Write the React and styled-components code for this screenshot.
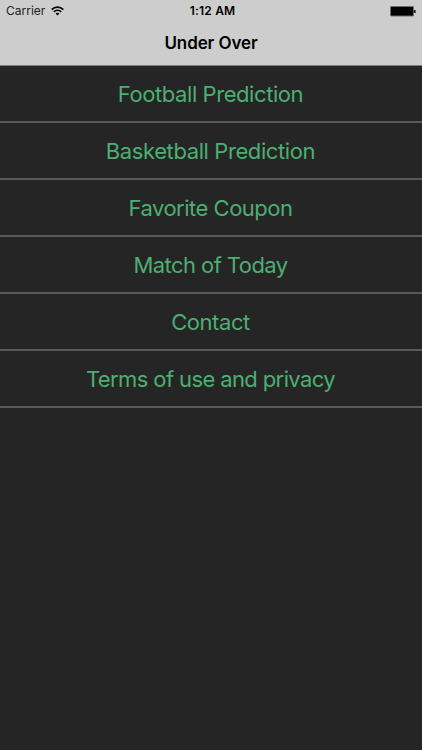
import React from 'react';
import styled, { createGlobalStyle } from 'styled-components';

const GlobalStyle = createGlobalStyle`
  * {
    box-sizing: border-box;
  }

  body {
    margin: 0;
    background-color: #252525;
    font-family: Inter, Roboto, sans-serif;
  }
`;

const Screen = styled.div`
  min-height: 100vh;
  background-color: #252525;
`;

const Header = styled.header`
  height: 66px;
  background-color: #cdcdcd;
  border-bottom: 1px solid #7b7f7c;
  color: #000;
`;

const StatusBar = styled.div`
  display: grid;
  grid-template-columns: 1fr auto 1fr;
  align-items: center;
  height: 22px;
  padding: 0 6px;
`;

const Carrier = styled.div`
  display: flex;
  align-items: center;
  gap: 6px;
  font-size: 12px;
  line-height: 22px;
  color: #222;
`;

const Clock = styled.div`
  padding-left: 3px;
  font-size: 12px;
  font-weight: 600;
  line-height: 22px;
  letter-spacing: 0.2px;
`;

const Battery = styled.svg`
  justify-self: end;
  display: block;
`;

const Title = styled.h1`
  margin: 0;
  font-size: 17px;
  font-weight: 600;
  line-height: 43px;
  letter-spacing: -0.1px;
  text-align: center;
`;

const Menu = styled.ul`
  margin: 0;
  padding: 0;
  list-style: none;
`;

const MenuItem = styled.li`
  display: flex;
  align-items: center;
  justify-content: center;
  height: 57px;
  padding-right: 1px;
  border-bottom: 2px solid #5a5a5a;
  color: #4caf72;
  font-size: 22px;
  letter-spacing: ${props => props.$spacing}px;
  white-space: nowrap;
  cursor: pointer;
`;

const items = [
  { label: 'Football Prediction', spacing: -0.43 },
  { label: 'Basketball Prediction', spacing: -0.4 },
  { label: 'Favorite Coupon', spacing: -0.5 },
  { label: 'Match of Today', spacing: -0.56 },
  { label: 'Contact', spacing: -0.42 },
  { label: 'Terms of use and privacy', spacing: -0.61 },
];

const WifiIcon = () => (
  <svg width="13" height="10" viewBox="0 0 13 10" fill="none" stroke="#000" strokeWidth="1.7">
    <path d="M0.7 3.6C3.9 0.4 9.1 0.4 12.3 3.6" />
    <path d="M2.8 5.8C4.9 3.8 8.1 3.8 10.2 5.8" />
    <path d="M6.5 9.5L4.6 7.5C5.7 6.5 7.3 6.5 8.4 7.5Z" fill="#000" stroke="none" />
  </svg>
);

const App = () => {
  return (
    <Screen>
      <GlobalStyle />
      <Header>
        <StatusBar>
          <Carrier>
            Carrier
            <WifiIcon />
          </Carrier>
          <Clock>1:12 AM</Clock>
          <Battery width="26" height="11" viewBox="0 0 26 11">
            <rect x="0.5" y="0.5" width="23" height="9.5" rx="1" fill="#000" stroke="#6c6c6c" />
            <rect x="24" y="4" width="1.6" height="3" rx="0.5" fill="#111" />
          </Battery>
        </StatusBar>
        <Title>Under Over</Title>
      </Header>
      <Menu>
        {items.map((item) => (
          <MenuItem key={item.label} $spacing={item.spacing}>{item.label}</MenuItem>
        ))}
      </Menu>
    </Screen>
  );
};

export default App;
